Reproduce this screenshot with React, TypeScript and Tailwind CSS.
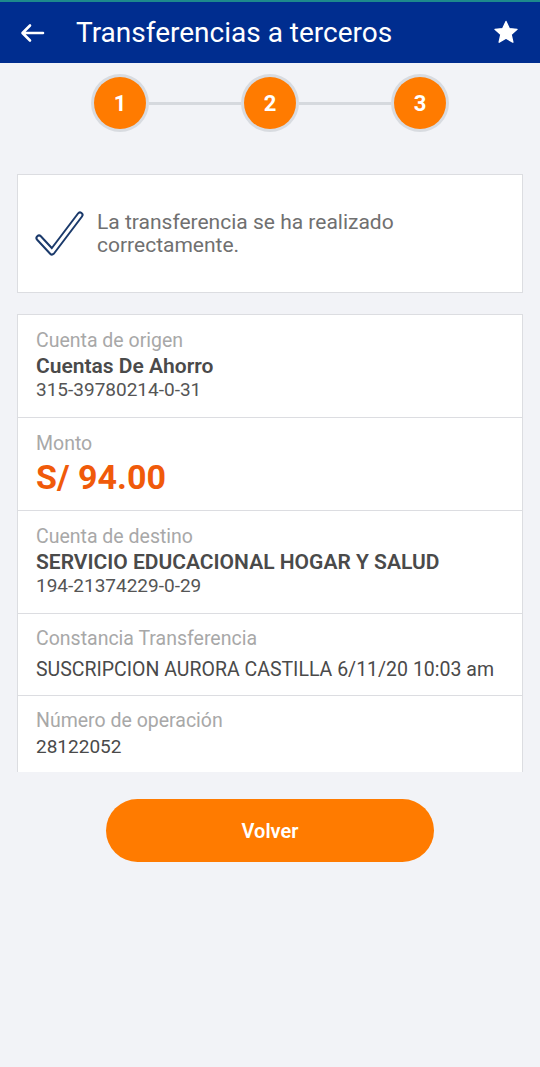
import React from 'react';

const font = { fontFamily: 'Roboto, "Liberation Sans", sans-serif' };

function Step({ n }: { n: number }) {
  return (
    <div className="w-[58px] h-[58px] rounded-full bg-[#d8dbe0] flex items-center justify-center shrink-0">
      <div className="w-[52px] h-[52px] rounded-full bg-[#ff7b00] flex items-center justify-center text-white text-[22px] font-bold">
        {n}
      </div>
    </div>
  );
}

function Label({ children }: { children: React.ReactNode }) {
  return <div className="text-[19.5px] leading-6 text-[#a8a8a8]">{children}</div>;
}

export default function App() {
  return (
    <div className="min-h-[1067px] bg-[#f2f3f7]" style={font}>
      {/* header */}
      <div className="h-[2px] bg-[#1d8a8c]" />
      <div className="h-[61px] bg-[#002d8f] flex items-center px-[20px]">
        <svg width="25" height="20" viewBox="0 0 25 20" fill="none" stroke="white" strokeWidth="2.6" strokeLinecap="round" strokeLinejoin="round">
          <path d="M23 10H3M10 2.5L2.5 10L10 17.5" />
        </svg>
        <div className="ml-[31px] text-white text-[28px] leading-none flex-1">Transferencias a terceros</div>
        <svg width="28" height="27" viewBox="0 0 24 24" fill="white">
          <path d="M12 2.2l2.9 6.3 6.9.7-5.2 4.6 1.5 6.8L12 17.1l-6.1 3.5 1.5-6.8-5.2-4.6 6.9-.7z" strokeLinejoin="round" stroke="white" strokeWidth="1.2" />
        </svg>
      </div>

      {/* stepper */}
      <div className="flex items-center justify-center pt-[11px]">
        <Step n={1} />
        <div className="w-[92px] h-[3px] bg-[#d6d9de]" />
        <Step n={2} />
        <div className="w-[92px] h-[3px] bg-[#d6d9de]" />
        <Step n={3} />
      </div>

      {/* success card */}
      <div className="mx-[17px] mt-[42px] h-[119px] bg-white border border-[#dcdde1] flex items-center pl-[17px]">
        <svg width="50" height="50" viewBox="0 0 50 50" fill="none" strokeLinecap="round" strokeLinejoin="round" className="shrink-0">
          <path d="M4 29L17 43L45 6" stroke="#1b3a6b" strokeWidth="7" />
          <path d="M4 29L17 43L45 6" stroke="white" strokeWidth="3" />
        </svg>
        <div className="ml-[12px] text-[21px] leading-[23px] text-[#707070]">
          <div>La transferencia se ha realizado</div>
          <div>correctamente.</div>
        </div>
      </div>

      {/* details card */}
      <div className="mx-[17px] mt-[21px] h-[458px] bg-white border-x border-t border-[#dcdde1] overflow-hidden">
        <div className="px-[18px] pt-[14px] pb-[15px] border-b border-[#dcdde1]">
          <Label>Cuenta de origen</Label>
          <div className="mt-[1px] text-[21px] leading-6 font-semibold text-[#4a4a4a]">Cuentas De Ahorro</div>
          <div className="text-[19px] leading-6 text-[#555]">315-39780214-0-31</div>
        </div>
        <div className="px-[18px] pt-[14px] pb-[12px] border-b border-[#dcdde1]">
          <Label>Monto</Label>
          <div className="text-[34px] leading-[42px] font-bold text-[#f05a0a]">S/ 94.00</div>
        </div>
        <div className="px-[18px] pt-[14px] pb-[15px] border-b border-[#dcdde1]">
          <Label>Cuenta de destino</Label>
          <div className="mt-[1px] text-[21px] leading-6 font-semibold text-[#4a4a4a]">SERVICIO EDUCACIONAL HOGAR Y SALUD</div>
          <div className="text-[19px] leading-6 text-[#555]">194-21374229-0-29</div>
        </div>
        <div className="px-[18px] pt-[13px] pb-[13px] border-b border-[#dcdde1]">
          <Label>Constancia Transferencia</Label>
          <div className="mt-[7px] text-[19.5px] leading-6 text-[#4a4a4a]">SUSCRIPCION AURORA CASTILLA 6/11/20 10:03 am</div>
        </div>
        <div className="px-[18px] pt-[13px]">
          <Label>Número de operación</Label>
          <div className="mt-[2px] text-[19px] leading-6 text-[#4a4a4a]">28122052</div>
        </div>
      </div>

      {/* button */}
      <div className="flex justify-center mt-[27px]">
        <button className="w-[328px] h-[63px] rounded-full bg-[#ff7b00] text-white text-[20px] font-semibold">
          Volver
        </button>
      </div>
    </div>
  );
}
